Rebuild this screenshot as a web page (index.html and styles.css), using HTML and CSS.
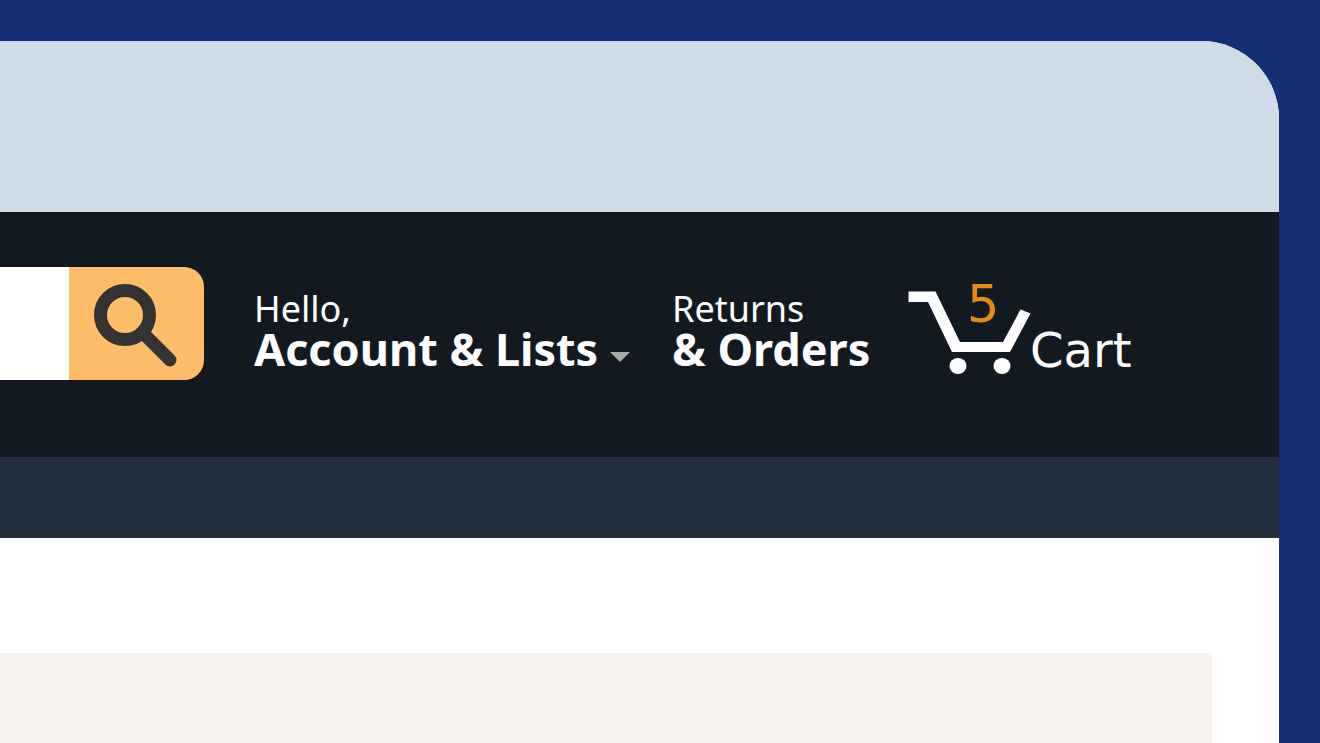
FILE: index.html
```html
<!DOCTYPE html>
<html lang="en">
<head>
  <meta charset="UTF-8">
  <meta name="viewport" content="width=device-width, initial-scale=1.0">
  <title>Account &amp; Lists</title>
  <link rel="stylesheet" href="styles.css">
</head>
<body>

<div class="window">
  <div class="window-top"></div>

  <header class="navbar">
    <form class="search">
      <input class="search-input" type="text" aria-label="Search">
      <button class="search-button" type="submit" aria-label="Go">
        <svg class="search-icon" viewBox="0 0 84 84" aria-hidden="true">
          <circle cx="31" cy="31" r="24.500" fill="none" stroke="#333" stroke-width="13"/>
          <path d="M50 50 L76 76" fill="none" stroke="#333" stroke-width="13" stroke-linecap="round"/>
        </svg>
      </button>
    </form>

    <a href="#" class="nav-link account">
      <span class="nav-line-1">Hello,</span>
      <span class="nav-line-2">Account &amp; Lists <span class="arrow"></span></span>
    </a>

    <a href="#" class="nav-link orders">
      <span class="nav-line-1">Returns</span>
      <span class="nav-line-2">&amp; Orders</span>
    </a>

    <a href="#" class="cart">
      <span class="cart-icon">
        <svg viewBox="0 0 122 84" aria-hidden="true">
          <path d="M0.500 0.500 H27.500 L52 51 H95 L112.500 18.500 L122.500 22.500 L102 61 H44 L20 11 H0.500 Z" fill="#fff"/>
          <ellipse cx="50" cy="75" rx="8.500" ry="8" fill="#fff"/>
          <ellipse cx="94" cy="75" rx="8.500" ry="8" fill="#fff"/>
        </svg>
        <span class="cart-count">5</span>
      </span>
      <span class="cart-label">Cart</span>
    </a>
  </header>

  <nav class="subnav"></nav>

  <main class="content">
    <div class="banner"></div>
  </main>
</div>

</body>
</html>
```
FILE: styles.css
```css
* {
  margin: 0;
  padding: 0;
  box-sizing: border-box;
}

body {
  min-height: 100vh;
  display: flex;
  padding: 41px 41px 0 0;
  background-color: #152f75;
  font-family: "Noto Sans", "Open Sans", sans-serif;
  color: #fff;
}

.window {
  flex: 1;
  display: flex;
  flex-direction: column;
  overflow: hidden;
  border-radius: 0 78px 0 0;
  background-color: #fff;
}

.window-top {
  height: 171px;
  background-color: #cfdbe5;
}

/* Main bar */
.navbar {
  display: flex;
  align-items: flex-start;
  padding: 55px 147px 77px 0;
  background-color: #131921;
}

.search {
  flex: 1;
  min-width: 0;
  display: flex;
  height: 113px;
  margin-right: 50px;
}

.search-input {
  flex: 1;
  min-width: 0;
  border: none;
  background-color: #fff;
}

.search-button {
  width: 135px;
  padding: 17px 25px;
  border: none;
  border-radius: 0 20px 20px 0;
  background-color: #febd69;
  cursor: pointer;
}

.search-icon {
  display: block;
  width: 84px;
  height: 84px;
}

.nav-link {
  flex-shrink: 0;
  display: flex;
  flex-direction: column;
  padding-top: 20px;
  color: #fff;
  text-decoration: none;
  white-space: nowrap;
}

.account {
  width: 374px;
  margin-right: 44px;
}

.orders {
  width: 201px;
  margin-right: 35px;
}

.nav-line-1 {
  font-size: 36px;
  line-height: 44px;
}

.nav-line-2 {
  font-size: 45px;
  line-height: 36px;
  font-weight: 700;
}

.arrow {
  display: inline-block;
  margin-bottom: 4px;
  border: 10px solid transparent;
  border-top-color: #aaa;
  border-bottom: none;
}

/* Cart */
.cart {
  flex-shrink: 0;
  display: flex;
  width: 224px;
  padding-top: 24px;
  color: #fff;
  text-decoration: none;
}

.cart-icon {
  position: relative;
  width: 122px;
}

.cart-icon svg {
  display: block;
  width: 122px;
  height: 84px;
  overflow: visible;
}

.cart-count {
  position: absolute;
  top: -12px;
  left: 59px;
  color: #e88b0c;
  font-family: "DejaVu Sans", sans-serif;
  font-size: 51px;
  line-height: 51px;
}

.cart-label {
  padding-top: 40px;
  font-family: "DejaVu Sans", sans-serif;
  font-size: 48px;
  line-height: 38px;
}

.subnav {
  height: 81px;
  background-color: #232f3e;
}

/* Page body */
.content {
  flex: 1;
  display: flex;
  padding: 115px 67px 0 0;
}

.banner {
  flex: 1;
  background-color: #f5f1ee;
}
```
